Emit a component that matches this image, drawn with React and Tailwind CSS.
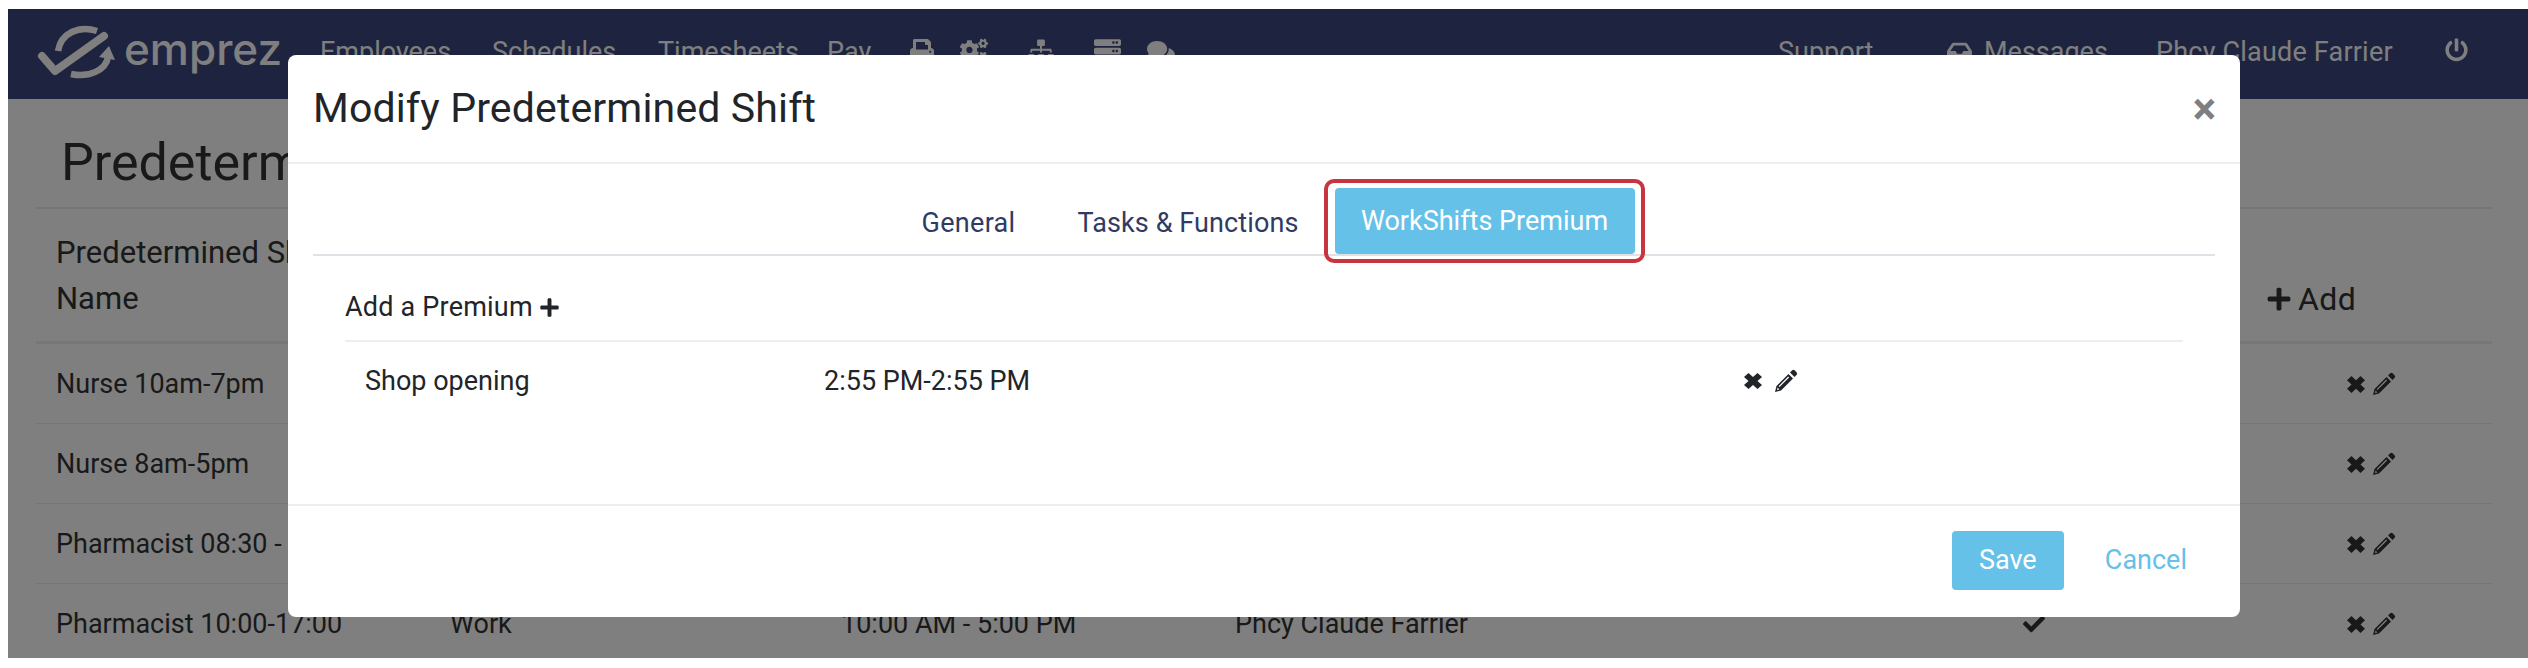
import { FaPrint, FaCogs, FaSitemap, FaServer, FaComments, FaInbox, FaPlus, FaCheck, FaPowerOff } from 'react-icons/fa'

const Cross = ({ className }) => (
  <svg className={className} viewBox="0 0 20 20" fill="currentColor" preserveAspectRatio="none">
    <path d="M1 5.5 5.5 1 10 5.5 14.5 1 19 5.5 14.5 10 19 14.5 14.5 19 10 14.5 5.5 19 1 14.5 5.5 10Z" />
  </svg>
)

const Pencil = ({ className }) => (
  <svg className={className} viewBox="0 0 24 24" fill="currentColor">
    <path d="M18 1.5a2 2 0 0 1 2.8 0l1.7 1.7a2 2 0 0 1 0 2.8l-2 2L16 3.5Z" />
    <path fillRule="evenodd" d="M14.5 5 19 9.5 7 21.5 1 23l1.5-6ZM14.2 7.6 4.6 17.2l.9.9 9.6-9.6ZM3.6 18.6 3 21l2.4-.6Z" />
  </svg>
)

const Logo = () => (
  <svg className="w-[82px] h-[60px] shrink-0" viewBox="0 0 82 60" fill="none" stroke="currentColor">
    <path d="M5 32 18 47 67 12" strokeWidth="8" strokeLinecap="round" strokeLinejoin="round" />
    <path d="M21 27C24 9 42 1 60 7" strokeWidth="6.5" />
    <path d="M34 50C52 54 69 46 71 33" strokeWidth="6.5" />
    <path d="M62 33 72 22 78 36Z" fill="currentColor" stroke="none" />
  </svg>
)

const rows = [
  { name: 'Nurse 10am-7pm' },
  { name: 'Nurse 8am-5pm' },
  { name: 'Pharmacist 08:30 - 17:30' },
  { name: 'Pharmacist 10:00-17:00', type: 'Work', time: '10:00 AM - 5:00 PM', who: 'Phcy Claude Farrier', ok: true },
]

const RowIcons = () => (
  <div className="flex items-center gap-[6px] -ml-[1px]">
    <Cross className="w-[20px] h-[19px]" />
    <Pencil className="w-[24px] h-[24px]" />
  </div>
)

const App = () => {
  return (
    <div className="h-[668px] w-[2528px] bg-white pt-[9px] pb-[10px] pl-2 overflow-hidden" style={{ fontFamily: 'Roboto, sans-serif' }}>
      <div className="relative h-full bg-white overflow-hidden">
        {/* navbar */}
        <div className="h-[90px] bg-[#3c4680] text-white flex pl-[29px] pt-[15px] text-[27px] leading-[56px]">
          <Logo />
          <span className="ml-[5px] text-[44px] leading-[50px] font-medium w-[163px]" style={{ fontFamily: 'Inter, sans-serif' }}>emprez</span>
          <span className="ml-[33px] w-[130px]">Employees</span>
          <span className="ml-[42px] w-[125px]">Schedules</span>
          <span className="ml-[41px] w-[130px]">Timesheets</span>
          <span className="ml-[39px] w-[43px]">Pay</span>
          <FaPrint className="ml-[40px] w-[24px] h-[26px] mt-[14px]" />
          <FaCogs className="ml-[26px] w-[28px] h-[28px] mt-[12px]" />
          <FaSitemap className="ml-[40px] w-[26px] h-[26px] mt-[13px]" />
          <FaServer className="ml-[40px] w-[27px] h-[28px] mt-[13px]" />
          <FaComments className="ml-[26px] w-[28px] h-[28px] mt-[14px]" />
          <span className="ml-[603px] w-[96px]">Support</span>
          <FaInbox className="ml-[73px] w-[25px] h-[26px] mt-[14px]" />
          <span className="ml-[12px] w-[118px]">Messages</span>
          <span className="ml-[54px] w-[235px] whitespace-nowrap tracking-[0.2px]">Phcy Claude Farrier</span>
          <FaPowerOff className="ml-[54px] w-[23px] h-[24px] mt-[14px]" />
        </div>

        {/* page behind the dialog */}
        <div className="ml-[28px] w-[2456px] text-[#333] text-[27px]">
          <h1 className="pl-[25px] h-[110px] pt-[34px] border-b-2 border-[#eee] text-[52px] leading-[60px]">Predetermined Shifts</h1>
          <div className="h-[135px] border-b-[3px] border-[#eee] pl-[20px] pt-[21px] grid grid-cols-[2210px_1fr] text-[31px] leading-[46px]">
            <div className="w-[330px]">Predetermined Shift<br />Name</div>
            <div className="flex items-center gap-[6px] self-start mt-[46px]">
              <FaPlus className="w-[26px] h-[26px]" />
              <span className="text-[32px] tracking-[0.4px]">Add</span>
            </div>
          </div>
          {rows.map((r) => (
            <div key={r.name} className="h-[80px] border-b border-[#eee] pl-[20px] grid grid-cols-[394px_391px_394px_788px_324px_1fr] items-center leading-[80px]">
              <div className="whitespace-nowrap">{r.name}</div>
              <div>{r.type}</div>
              <div>{r.time}</div>
              <div>{r.who}</div>
              <div>{r.ok && <FaCheck className="w-[22px] h-[22px]" />}</div>
              <RowIcons />
            </div>
          ))}
        </div>

        {/* backdrop */}
        <div className="absolute inset-0 bg-black/50" />

        {/* dialog */}
        <div className="absolute left-[280px] top-[46px] w-[1952px] h-[562px] bg-white rounded-[8px] text-[#212529] text-[27px] flex flex-col">
          <div className="h-[109px] shrink-0 border-b-2 border-[#eee] flex items-center justify-between pl-[25px] pr-[24px]">
            <h2 className="text-[41px] leading-none tracking-[0.15px]">Modify Predetermined Shift</h2>
            <span className="text-[44px] leading-none font-bold text-[#7f7f7f]">×</span>
          </div>
          <div className="flex-1 px-[25px]">
            <div className="relative h-[92px] border-b-2 border-[#dee2e6] flex justify-center pl-[28px]">
              <div className="flex items-end text-[#2f3b63]">
                <span className="w-[93px] mr-[63px] mb-[11px] whitespace-nowrap tracking-[0.3px]">General</span>
                <span className="w-[219px] mr-[38px] mb-[11px] whitespace-nowrap tracking-[0.1px]">Tasks &amp; Functions</span>
                <span className="w-[300px] h-[66px] mt-[25px] bg-[#65c1e8] rounded-[4px] text-white flex items-center justify-center whitespace-nowrap">WorkShifts Premium</span>
              </div>
              <div className="absolute left-[1011px] top-[15px] w-[321px] h-[84px] border-[4px] border-[#c8353f] rounded-[10px]" />
            </div>
            <div className="mx-[32px] h-[86px] border-b-2 border-[#eee] flex items-center gap-[6px] pt-[18px]">
              <span className="tracking-[0.2px]">Add a Premium</span>
              <FaPlus className="w-[21px] h-[21px]" />
            </div>
            <div className="ml-[52px] grid grid-cols-[459px_919px_auto] items-center h-[78px]">
              <span>Shop opening</span>
              <span>2:55 PM-2:55 PM</span>
              <div className="flex items-center gap-[11px]">
                <Cross className="w-[20px] h-[18px]" />
                <Pencil className="w-[24px] h-[24px]" />
              </div>
            </div>
          </div>
          <div className="h-[113px] shrink-0 border-t-2 border-[#eee] flex items-center justify-end pr-[53px] pb-[3px]">
            <button className="w-[112px] h-[59px] bg-[#65c1e8] rounded-[4px] text-white">Save</button>
            <span className="ml-[41px] text-[#65c1e8]">Cancel</span>
          </div>
        </div>
      </div>
    </div>
  )
}

export default App
